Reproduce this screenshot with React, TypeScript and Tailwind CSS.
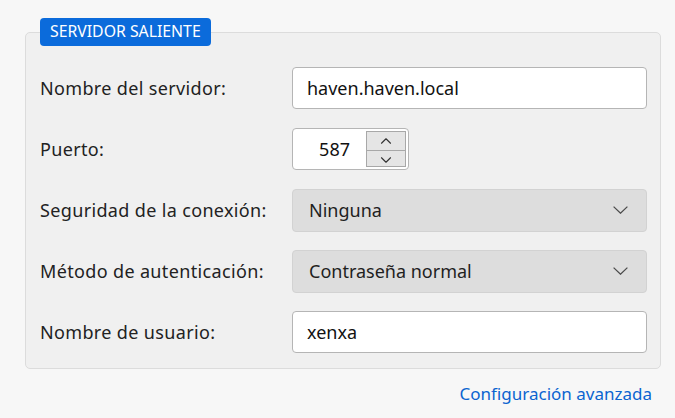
import { ChevronDown, ChevronUp } from 'lucide-react'

const font = { fontFamily: '"Noto Sans", "Open Sans", sans-serif' }

function Row({ label, children }: { label: string; children: React.ReactNode }) {
  return (
    <div className="flex items-center h-[42px]">
      <div className="w-[252px] shrink-0 text-[18px] tracking-[0.35px] text-[#222]">{label}</div>
      {children}
    </div>
  )
}

function TextBox({ value }: { value: string }) {
  return (
    <div className="flex-1 h-[42px] flex items-center px-[14px] bg-white border border-[#b5b5b5] rounded-[4px] text-[18px] text-[#111]">
      {value}
    </div>
  )
}

function Select({ value }: { value: string }) {
  return (
    <div className="flex-1 h-[43px] flex items-center justify-between pl-[16px] pr-[18px] bg-[#dddddd] border border-[#d2d2d2] rounded-[4px] text-[18px] text-[#1f1f1f]">
      <span>{value}</span>
      <svg width="15" height="8" viewBox="0 0 15 8" fill="none">
        <polyline points="0.6,0.6 7.5,7.2 14.4,0.6" stroke="#4a4a4a" strokeWidth="1.25" />
      </svg>
    </div>
  )
}

export default function App() {
  return (
    <div className="w-[675px] h-[418px] bg-[#f7f7f7] pt-[18px] pl-[25px] pr-[14px]" style={font}>
      <div className="relative pt-[14px]">
        <div className="absolute left-[15px] top-0 z-10 h-[28px] px-[10px] flex items-center bg-[#0b6bdb] rounded-[4px] text-white text-[15.8px]">
          SERVIDOR SALIENTE
        </div>
        <div className="bg-[#f0f0f0] border border-[#dcdcdc] rounded-[5px] pl-[14px] pr-[13px] pt-[34px] pb-[15px] flex flex-col gap-[19px]">
          <Row label="Nombre del servidor:">
            <TextBox value="haven.haven.local" />
          </Row>
          <Row label="Puerto:">
            <div className="w-[117px] h-[42px] flex items-center bg-white border border-[#b5b5b5] rounded-[4px] pr-[2px]">
              <div className="flex-1 text-right pr-[16px] text-[18px] text-[#111]">587</div>
              <div className="w-[40px] h-[36px] flex flex-col border border-[#a8a8a8] bg-[#e5e5e5]">
                <div className="flex-1 flex items-center justify-center border-b border-[#a8a8a8]">
                  <ChevronUp className="w-[18px] h-[18px] text-[#333]" strokeWidth={1.5} />
                </div>
                <div className="flex-1 flex items-center justify-center">
                  <ChevronDown className="w-[18px] h-[18px] text-[#333]" strokeWidth={1.5} />
                </div>
              </div>
            </div>
          </Row>
          <Row label="Seguridad de la conexión:">
            <Select value="Ninguna" />
          </Row>
          <Row label="Método de autenticación:">
            <Select value="Contraseña normal" />
          </Row>
          <Row label="Nombre de usuario:">
            <TextBox value="xenxa" />
          </Row>
        </div>
      </div>
      <div className="flex justify-end pr-[9px] mt-[12px]">
        <span className="text-[17px] text-[#0b64d0]">Configuración avanzada</span>
      </div>
    </div>
  )
}
